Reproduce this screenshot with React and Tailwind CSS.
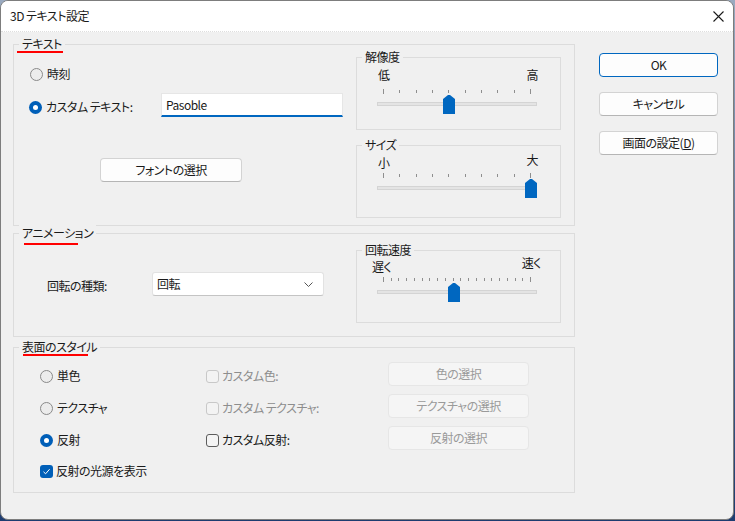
import React from "react";

const font = "font-['Noto_Sans_CJK_JP','Noto_Sans',sans-serif] [font-feature-settings:'palt'] tracking-[-0.5px]";

function Group({ label, red, className, children }) {
  return (
    <div className={"relative border border-[#dcdcdc] " + className}>
      <span className="absolute left-[5px] -top-[9px] bg-[#f0f0f0] px-[3px] leading-[16px] whitespace-nowrap">
        {label}
      </span>
      {red && <div className={"absolute h-[2px] bg-[#ff0000] " + red} />}
      {children}
    </div>
  );
}

function Slider({ ticks, value }) {
  const xs = Array.from({ length: ticks }, (_, i) => Math.round(6 + (147 * i) / (ticks - 1)) + 0.5);
  const tx = Math.round(xs[value]);
  return (
    <svg width="160" height="28" className="block ml-[20px]">
      {xs.map((x, i) => {
        const end = i === 0 || i === ticks - 1;
        return <line key={i} x1={x} x2={x} y1={end ? 1 : 2} y2={end ? 6 : 5} stroke="#8e8e8e" />;
      })}
      <rect x="0.5" y="14.5" width="159" height="3" fill="#e4e4e4" stroke="#d4d4d4" />
      <path d={`M${tx - 6} 11 L${tx - 1} 7 H${tx + 1} L${tx + 6} 11 V26 H${tx - 6} Z`} fill="#0067c0" />
    </svg>
  );
}

function Radio({ checked, label }) {
  return (
    <div className="flex items-center h-[16px]">
      {checked ? (
        <span className="w-[13px] h-[13px] rounded-full bg-[#005fb8] flex items-center justify-center">
          <span className="w-[5px] h-[5px] rounded-full bg-white" />
        </span>
      ) : (
        <span className="w-[13px] h-[13px] rounded-full border border-[#8a8a8a] bg-[#ececec]" />
      )}
      <span className="ml-[4px] whitespace-nowrap">{label}</span>
    </div>
  );
}

function Check({ checked, disabled, label }) {
  let box = "border border-[#5c5c5c] bg-[#f4f4f4]";
  if (disabled) box = "border border-[#c8c8c8] bg-[#f3f3f3]";
  return (
    <div className="flex items-center h-[16px]">
      {checked ? (
        <span className="w-[13px] h-[13px] rounded-[3px] bg-[#005fb8] flex items-center justify-center">
          <svg width="9" height="9" viewBox="0 0 9 9">
            <path d="M1.5 4.8 L3.6 6.8 L7.6 2.2" fill="none" stroke="white" strokeWidth="1" />
          </svg>
        </span>
      ) : (
        <span className={"w-[13px] h-[13px] rounded-[3px] " + box} />
      )}
      <span className={"ml-[3px] whitespace-nowrap " + (disabled ? "text-[#8d8d8d]" : "")}>{label}</span>
    </div>
  );
}

function Btn({ children, className, primary, disabled }) {
  let look = "bg-[#fdfdfd] border border-[#d3d3d3] border-b-[#b5b5b5]";
  if (primary) look = "bg-[#fdfdfd] border border-[#0067c0]";
  if (disabled) look = "bg-[#f5f5f5] border border-[#e6e6e6] text-[#9a9a9a]";
  return (
    <div className={"h-[24px] rounded-[4px] flex items-center justify-center " + look + " " + className}>
      {children}
    </div>
  );
}

export default function App() {
  return (
    <div className={"w-[735px] h-[521px] bg-gradient-to-b from-[#9aaac0] to-[#1d3c70] text-[12px] text-[#1a1a1a] " + font}>
      <div className="w-[734px] h-[520px] rounded-[8px] border border-[#7d7d7d] overflow-hidden flex flex-col bg-[#f0f0f0]">
        {/* title bar */}
        <div className="h-[31px] bg-white border-b border-dotted border-[#dedede] flex items-center justify-between pl-[9px] pr-[9px]">
          <span className="leading-[16px]">3D テキスト設定</span>
          <svg width="11" height="11" viewBox="0 0 11 11">
            <path d="M0.5 0.5 L10.5 10.5 M10.5 0.5 L0.5 10.5" stroke="#1a1a1a" strokeWidth="1.1" />
          </svg>
        </div>

        <div className="flex pl-[12px] pt-[12px]">
          {/* left column */}
          <div className="w-[562px] flex flex-col">
            <Group label="テキスト" red="top-[6px] left-[3px] w-[46px]" className="h-[182px] flex">
              <div className="w-[342px] pl-[16px]">
                <div className="mt-[21px]">
                  <Radio label="時刻" />
                </div>
                <div className="mt-[11px] flex">
                  <div className="w-[132px] mt-[6px] -ml-px">
                    <Radio checked label="カスタム テキスト:" />
                  </div>
                  <div className="w-[182px] h-[24px] bg-white border border-[#e6e6e6] border-b-2 border-b-[#0067c0] pl-[4px] flex items-center">
                    Pasoble
                  </div>
                </div>
                <Btn className="mt-[41px] ml-[70px] w-[142px]">フォントの選択</Btn>
              </div>
              <div className="w-[205px]">
                <Group label="解像度" className="mt-[12px] h-[73px]">
                  <div className="mt-[9px] pl-[21px] pr-[22px] flex justify-between leading-[16px]">
                    <span>低</span>
                    <span>高</span>
                  </div>
                  <div className="mt-[5px]">
                    <Slider ticks={10} value={4} />
                  </div>
                </Group>
                <Group label="サイズ" className="mt-[15px] h-[73px]">
                  <div className="mt-[6px] pl-[21px] pr-[22px] flex justify-between items-start leading-[16px]">
                    <span className="mt-[3px]">小</span>
                    <span>大</span>
                  </div>
                  <div className="mt-[1px]">
                    <Slider ticks={10} value={9} />
                  </div>
                </Group>
              </div>
            </Group>

            <Group label="アニメーション" red="top-[9px] left-[10px] w-[54px]" className="mt-[7px] h-[104px] flex">
              <div className="w-[342px] pl-[33px]">
                <div className="mt-[38px] flex items-center h-[24px]">
                  <span className="w-[105px] pt-[3px]">回転の種類:</span>
                  <div className="w-[172px] h-[24px] bg-white border border-[#e2e2e2] border-b-[#c4c4c4] rounded-[3px] pl-[4px] pr-[10px] flex items-center justify-between">
                    <span>回転</span>
                    <svg width="9" height="5" viewBox="0 0 9 5">
                      <path d="M0.5 0.5 L4.5 4.5 L8.5 0.5" fill="none" stroke="#555" strokeWidth="1" />
                    </svg>
                  </div>
                </div>
              </div>
              <div className="w-[205px]">
                <Group label="回転速度" className="mt-[16px] h-[73px]">
                  <div className="mt-[4px] pl-[15px] pr-[19px] flex justify-between items-start leading-[16px]">
                    <span className="mt-[4px]">遅く</span>
                    <span>速く</span>
                  </div>
                  <div className="mt-[1px]">
                    <Slider ticks={20} value={9} />
                  </div>
                </Group>
              </div>
            </Group>

            <Group label="表面のスタイル" red="top-[6px] left-[9px] w-[65px]" className="mt-[10px] h-[146px]">
              <div className="pt-[14px] pl-[26px]">
                <div className="flex h-[24px]">
                  <div className="w-[166px] mt-[6px]"><Radio label="単色" /></div>
                  <div className="w-[182px] mt-[6px]"><Check disabled label="カスタム色:" /></div>
                  <Btn disabled className="w-[141px]">色の選択</Btn>
                </div>
                <div className="flex h-[24px] mt-[8px]">
                  <div className="w-[166px] mt-[6px]"><Radio label="テクスチャ" /></div>
                  <div className="w-[182px] mt-[6px]"><Check disabled label="カスタム テクスチャ:" /></div>
                  <Btn disabled className="w-[141px]">テクスチャの選択</Btn>
                </div>
                <div className="flex h-[24px] mt-[8px]">
                  <div className="w-[166px] mt-[6px]"><Radio checked label="反射" /></div>
                  <div className="w-[182px] mt-[6px]"><Check label="カスタム反射:" /></div>
                  <Btn disabled className="w-[141px]">反射の選択</Btn>
                </div>
                <div className="mt-[13px]">
                  <Check checked label="反射の光源を表示" />
                </div>
              </div>
            </Group>
          </div>

          {/* right column */}
          <div className="ml-[24px] w-[119px] flex flex-col pt-[9px]">
            <Btn primary>OK</Btn>
            <Btn className="mt-[15px]">キャンセル</Btn>
            <Btn className="mt-[15px]">
              画面の設定(<span className="underline">D</span>)
            </Btn>
          </div>
        </div>
      </div>
    </div>
  );
}
